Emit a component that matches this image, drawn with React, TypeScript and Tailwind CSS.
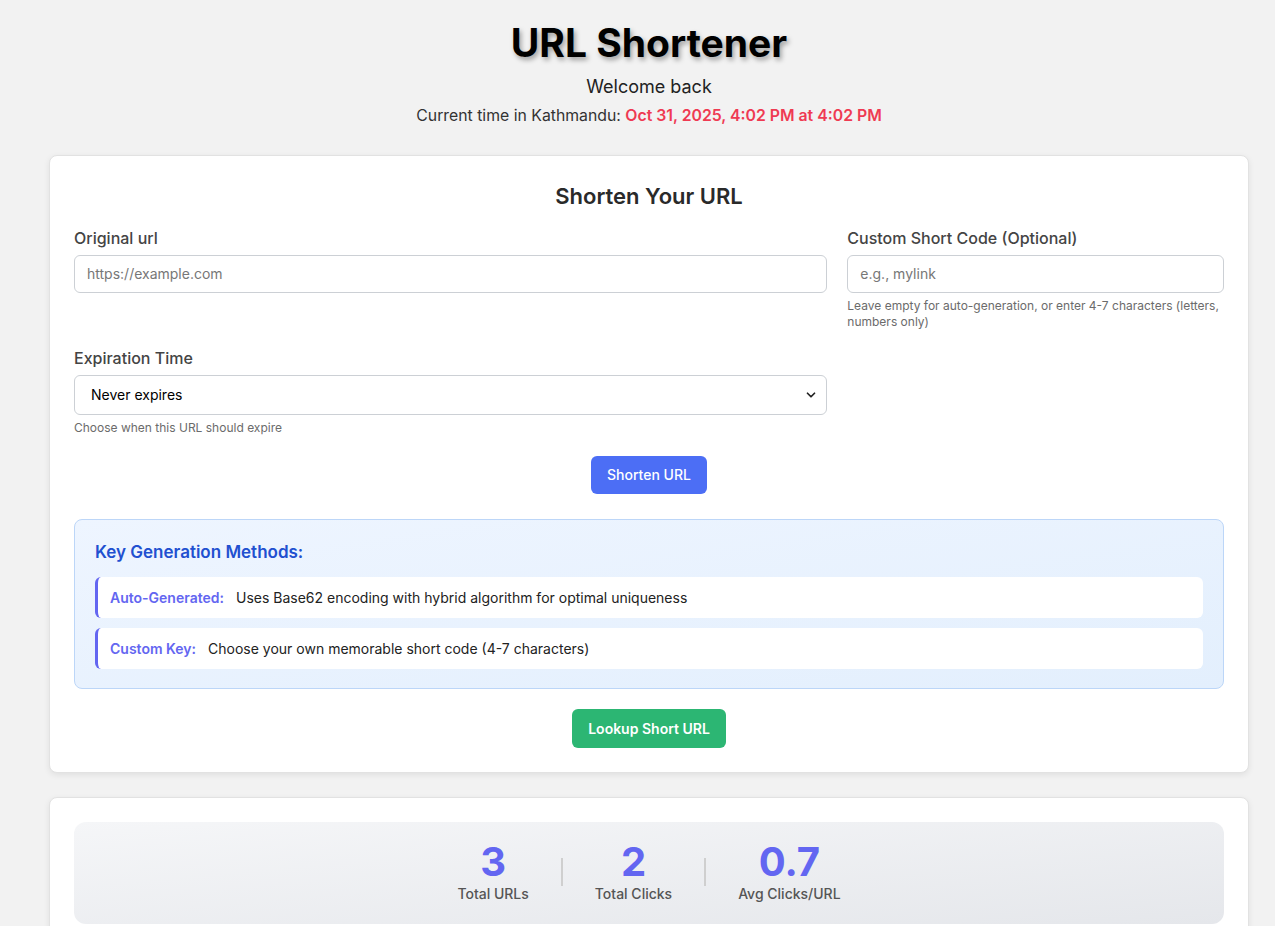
import { ChevronDown } from 'lucide-react';

const stats = [
  { value: '3', label: 'Total URLs' },
  { value: '2', label: 'Total Clicks' },
  { value: '0.7', label: 'Avg Clicks/URL' },
];

export default function App() {
  return (
    <div className="min-h-screen bg-[#f2f2f2] font-['Inter',sans-serif] text-[#333]">
      <div className="ml-[49px] w-[1200px] pt-[19px]">
        {/* header */}
        <header className="flex flex-col items-center">
          <h1 className="text-[39px] leading-[48px] font-bold text-black [text-shadow:2px_3px_5px_rgba(0,0,0,0.35)]">
            URL Shortener
          </h1>
          <p className="mt-[7px] text-lg leading-[26px] text-[#222]">Welcome back</p>
          <p className="mt-[4px] text-[15.8px] leading-6 text-[#333]">
            Current time in Kathmandu:{' '}
            <span className="font-semibold text-[#ef3a52]">Oct 31, 2025, 4:02 PM at 4:02 PM</span>
          </p>
        </header>

        {/* shorten form */}
        <section className="mt-[27px] rounded-lg border border-[#e2e2e2] bg-white px-6 pt-6 pb-6 shadow-[0_2px_6px_rgba(0,0,0,0.08)]">
          <h2 className="text-center text-[22px] leading-[32px] font-semibold text-[#2a2a2a]">Shorten Your URL</h2>

          <div className="mt-[14px] grid grid-cols-[2fr_1fr] gap-x-5">
            <div>
              <label className="block text-base leading-6 font-medium text-[#444]">Original url</label>
              <div className="mt-[5px] flex h-[38px] items-center rounded-md border border-[#ccd0d5] px-3 text-sm text-[#777]">
                https://example.com
              </div>
            </div>
            <div>
              <label className="block text-base leading-6 font-medium text-[#444]">Custom Short Code (Optional)</label>
              <div className="mt-[5px] flex h-[38px] items-center rounded-md border border-[#ccd0d5] px-3 text-sm text-[#777]">
                e.g., mylink
              </div>
              <p className="mt-[5px] text-xs leading-4 text-[#6b6b6b]">
                Leave empty for auto-generation, or enter 4-7 characters (letters, numbers only)
              </p>
            </div>

            <div className="mt-[16px]">
              <label className="block text-base leading-6 font-medium text-[#444]">Expiration Time</label>
              <div className="mt-[5px] flex h-[40px] items-center justify-between rounded-md border border-[#ccd0d5] pl-4 pr-2 text-sm text-black">
                <span>Never expires</span>
                <ChevronDown size={14} strokeWidth={3} className="text-[#222]" />
              </div>
              <p className="mt-[5px] text-xs leading-4 text-[#6b6b6b]">Choose when this URL should expire</p>
            </div>
          </div>

          <div className="mt-[20px] flex justify-center">
            <button className="h-[38px] rounded-md bg-[#4c6ef5] px-4 text-sm font-medium text-white">
              Shorten URL
            </button>
          </div>

          {/* key generation info */}
          <div className="mt-[25px] rounded-lg border border-[#bcd6f8] bg-gradient-to-br from-[#eef5ff] to-[#e3effd] px-5 pt-5 pb-[19px]">
            <h3 className="text-[17px] leading-[24px] font-semibold text-[#2150d0]">Key Generation Methods:</h3>
            <div className="mt-[13px] flex flex-col gap-[10px]">
              <div className="flex h-[41px] items-center rounded-md border-l-[3px] border-[#6366f1] bg-white px-3 text-sm">
                <span className="font-semibold text-[#6366f1]">Auto-Generated:</span>
                <span className="ml-3 text-[#222]">Uses Base62 encoding with hybrid algorithm for optimal uniqueness</span>
              </div>
              <div className="flex h-[41px] items-center rounded-md border-l-[3px] border-[#6366f1] bg-white px-3 text-sm">
                <span className="font-semibold text-[#6366f1]">Custom Key:</span>
                <span className="ml-3 text-[#222]">Choose your own memorable short code (4-7 characters)</span>
              </div>
            </div>
          </div>

          <div className="mt-[20px] flex justify-center">
            <button className="h-[39px] rounded-md bg-[#2cb673] px-4 text-sm font-semibold text-white">
              Lookup Short URL
            </button>
          </div>
        </section>

        {/* stats */}
        <section className="mt-[24px] rounded-lg border border-[#e2e2e2] bg-white px-6 pt-6 pb-6 shadow-[0_2px_6px_rgba(0,0,0,0.08)]">
          <div className="flex items-center justify-center gap-8 rounded-xl bg-gradient-to-br from-[#f5f6f8] to-[#e5e7eb] pt-[18px] pb-5">
            {stats.map((s, i) => (
              <div key={s.label} className="flex items-center gap-8">
                {i > 0 && <div className="h-[28px] w-[2px] bg-[#cfcfcf]" />}
                <div className="flex flex-col items-center">
                  <span className="text-[40px] leading-[44px] font-bold text-[#6366f1]">{s.value}</span>
                  <span className="text-sm leading-5 font-medium text-[#555]">{s.label}</span>
                </div>
              </div>
            ))}
          </div>
        </section>
      </div>
    </div>
  );
}
